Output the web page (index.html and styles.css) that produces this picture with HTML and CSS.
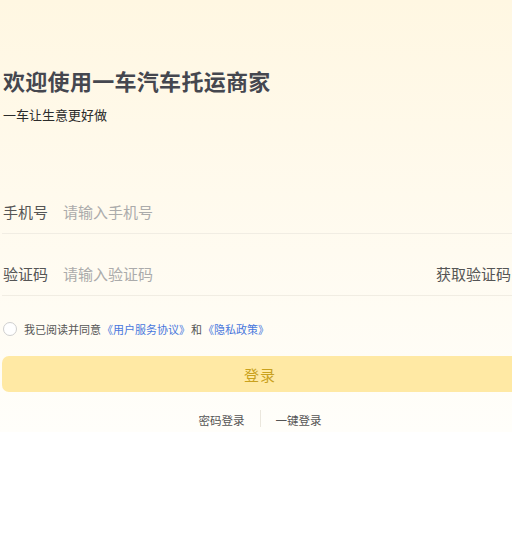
FILE: index.html
```html
<!DOCTYPE html>
<html lang="zh-CN">
<head>
<meta charset="utf-8">
<title>欢迎使用一车汽车托运商家</title>
<link rel="stylesheet" href="styles.css">
</head>
<body>
<div class="page">
  <div class="content">
    <h1 class="title">欢迎使用一车汽车托运商家</h1>
    <p class="subtitle">一车让生意更好做</p>

    <div class="form">
      <div class="row">
        <span class="label">手机号</span>
        <input class="input" type="text" placeholder="请输入手机号">
      </div>
      <div class="row">
        <span class="label">验证码</span>
        <input class="input" type="text" placeholder="请输入验证码">
        <span class="code-btn">获取验证码</span>
      </div>
    </div>

    <div class="agree">
      <span class="radio"></span>
      <span class="agree-text">我已阅读并同意<a class="link">《用户服务协议》</a>和<a class="link">《隐私政策》</a></span>
    </div>

    <button class="login-btn">登录</button>

    <div class="alt">
      <span class="alt-item">密码登录</span>
      <span class="alt-sep"></span>
      <span class="alt-item">一键登录</span>
    </div>
  </div>
</div>
</body>
</html>
```

FILE: styles.css
```css
html, body {
  margin: 0;
  padding: 0;
  background: #ffffff;
  overflow: hidden;
}

body {
  width: 512px;
  height: 544px;
  font-family: "Noto Sans CJK SC", "Noto Sans", sans-serif;
}

.page {
  background: linear-gradient(180deg, #fff7e2 0%, #fffaed 45%, #fffefa 100%);
  width: 512px;
  overflow: hidden;
}

.content {
  width: 516px;
  padding: 65px 0 0 2px;
  box-sizing: content-box;
}

.title {
  margin: 0;
  font-size: 22px;
  letter-spacing: 0.3px;
  line-height: 30px;
  font-weight: 700;
  color: #45474f;
  padding-left: 1px;
}

.subtitle {
  margin: 10px 0 0;
  font-size: 13px;
  line-height: 20px;
  color: #2b2b2b;
  padding-left: 1px;
}

.form {
  margin-top: 47px;
}

.row {
  display: flex;
  align-items: center;
  padding: 30px 0 11px;
  border-bottom: 1px solid #f1ede3;
  height: 20px;
}

.label {
  width: 60px;
  flex: none;
  padding-left: 1px;
  font-size: 15px;
  line-height: 20px;
  color: #555555;
}

.input {
  flex: 1;
  min-width: 0;
  border: none;
  outline: none;
  background: transparent;
  padding: 0;
  margin: 0;
  font-family: inherit;
  font-size: 15px;
  line-height: 20px;
  height: 20px;
  color: #333;
}

.input::placeholder {
  color: #ababab;
}

.code-btn {
  flex: none;
  font-size: 15px;
  line-height: 20px;
  color: #555555;
  padding-right: 7px;
}

.agree {
  display: flex;
  align-items: center;
  margin-top: 23px;
  height: 20px;
}

.radio {
  width: 12px;
  height: 12px;
  border: 1px solid #cfcfcf;
  border-radius: 50%;
  margin-left: 1px;
  margin-right: 7px;
  background: #fff;
  flex: none;
}

.agree-text {
  white-space: nowrap;
  font-size: 11px;
  line-height: 16px;
  color: #555555;
}

.link {
  color: #4877dd;
  text-decoration: none;
  margin: 0 1px;
}

.login-btn {
  display: block;
  margin-top: 17px;
  width: 516px;
  height: 36px;
  border: none;
  border-radius: 7px;
  background: #ffe9a4;
  color: #c9a11d;
  font-family: inherit;
  font-size: 15px;
  letter-spacing: 1px;
  padding: 0;
}

.alt {
  display: flex;
  justify-content: center;
  align-items: center;
  margin-top: 18px;
  padding-bottom: 2px;
  height: 20px;
}

.alt-item {
  font-size: 11.5px;
  line-height: 20px;
  color: #555555;
}

.alt-sep {
  width: 1px;
  height: 17px;
  background: #ebe7dd;
  margin: -4px 15px 0;
}
```
